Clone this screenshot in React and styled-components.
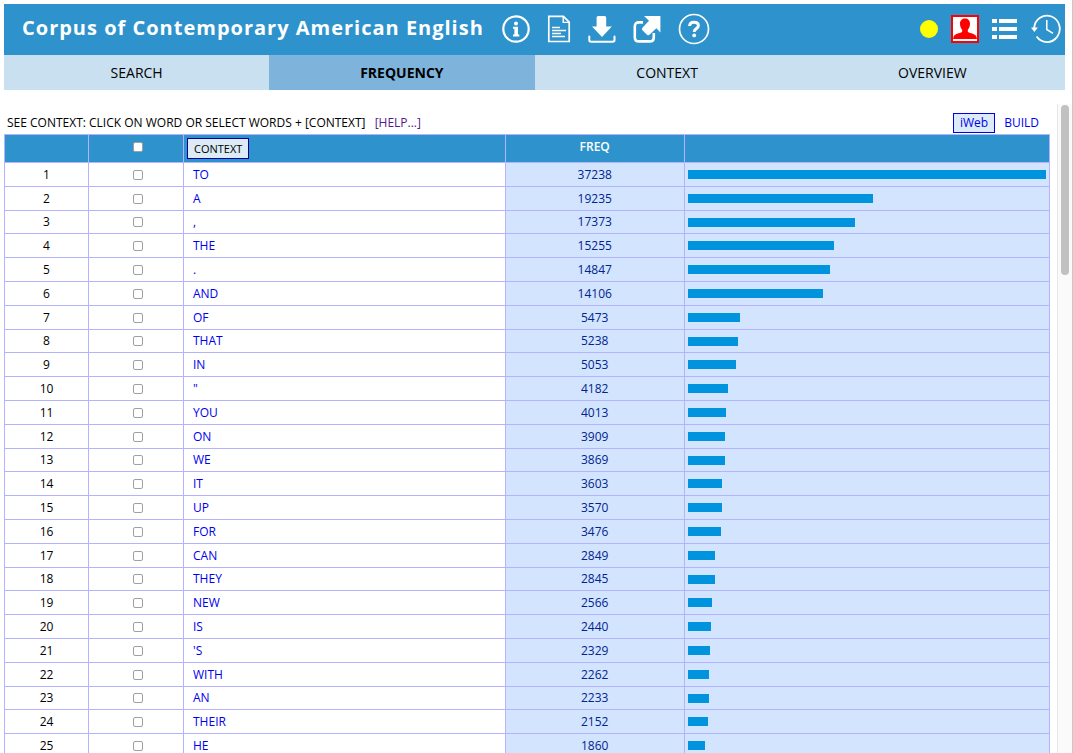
import React, { useState } from 'react';

import styled, { createGlobalStyle, css } from 'styled-components';

const WORDS = [
  ['TO', 37238],
  ['A', 19235],
  [',', 17373],
  ['THE', 15255],
  ['.', 14847],
  ['AND', 14106],
  ['OF', 5473],
  ['THAT', 5238],
  ['IN', 5053],
  ['"', 4182],
  ['YOU', 4013],
  ['ON', 3909],
  ['WE', 3869],
  ['IT', 3603],
  ['UP', 3570],
  ['FOR', 3476],
  ['CAN', 2849],
  ['THEY', 2845],
  ['NEW', 2566],
  ['IS', 2440],
  ['\'S', 2329],
  ['WITH', 2262],
  ['AN', 2233],
  ['THEIR', 2152],
  ['HE', 1860],
];

const MAX_FREQ = WORDS[0][1];

const TABS = ['SEARCH', 'FREQUENCY', 'CONTEXT', 'OVERVIEW'];

const GlobalStyle = createGlobalStyle`
    html, body, #root {
      height: 100%;
    }
    body {
      background: white;
      color: black;
      font-family: 'Open Sans', 'Noto Sans', sans-serif;
      font-size: 12px;
      line-height: 16px;
      margin: 0;
    }
    a {
      text-decoration: none;
    }
`;

const Page = styled.div`
    border-right: 1px solid #c8c8c8;
    box-sizing: border-box;
    display: flex;
    flex-direction: column;
    height: 100vh;
    overflow: hidden;
    padding: 4px 0 0 4px;
`;

const Top = styled.div`
    flex: none;
    margin: 0 7px 14px 0;
`;

const Header = styled.header`
    align-items: center;
    background: #2e93cc;
    color: white;
    display: flex;
    height: 50px;
    padding: 0 4px 1px 18px;
`;

const Title = styled.h1`
    font-size: 20px;
    font-weight: 700;
    letter-spacing: 1px;
    line-height: 28px;
    margin: 0 18px 3px 0;
    white-space: nowrap;
`;

const IconBar = styled.nav`
    align-items: center;
    display: flex;
    gap: ${props => props.$gap}px;
    margin-left: ${props => (props.$right ? 'auto' : '0')};
`;

const IconLink = styled.a`
    color: white;
    display: flex;
    svg {
      display: block;
    }
`;

const Tabs = styled.nav`
    display: flex;
`;

const Tab = styled.button`
    background: #c9e0f0;
    border: none;
    color: black;
    cursor: pointer;
    flex: 1 1 0;
    font: inherit;
    font-size: 14px;
    height: 35px;
    padding: 0;
    ${props => props.$active && css`
      background: #7eb4dc;
      font-weight: 700;
    `}
`;

const Body = styled.div`
    display: flex;
    flex: 1;
    min-height: 0;
`;

const Results = styled.main`
    flex: 1;
    margin-right: 7px;
    min-width: 0;
    overflow: hidden;
`;

const Intro = styled.div`
    align-items: center;
    box-sizing: border-box;
    display: flex;
    height: 30px;
    justify-content: space-between;
    padding: 8px 11px 0 3px;
`;

const HelpLink = styled.a`
    color: #551a8b;
    margin-left: 6px;
`;

const Links = styled.div`
    align-items: center;
    display: flex;
    gap: 9px;
`;

const TextLink = styled.a`
    color: #0000ee;
    ${props => props.$boxed && css`
      background: #dcebf5;
      border: 1px solid #0000ee;
      padding: 1px 6px;
    `}
`;

const Table = styled.table`
    border-collapse: collapse;
    table-layout: fixed;
    width: 100%;
    th, td {
      border: 1px solid #b3b3ff;
      box-sizing: border-box;
      padding: 0;
      text-align: center;
    }
    thead tr {
      background: #2e93cc;
      height: 28px;
    }
    tbody tr {
      height: 24px;
    }
    tbody tr:nth-child(5n + 3) {
      height: 23px;
    }
`;

const Col = styled.col`
    width: ${props => props.$width};
`;

const Heading = styled.th`
    color: white;
    font-weight: 600;
    && {
      padding: 0 0 3px ${props => (props.$check ? 4 : 0)}px;
    }
`;

const ButtonHeading = styled.th`
    font-weight: 400;
    && {
      padding-left: 3px;
      text-align: left;
    }
`;

const ContextButton = styled.button`
    background: #dcebf5;
    border: 1px solid #000099;
    color: black;
    cursor: pointer;
    display: block;
    font: inherit;
    font-size: 11px;
    height: 21px;
    padding: 0 6px;
`;

const Check = styled.input.attrs({ type: 'checkbox' })`
    appearance: none;
    background: white;
    border: 1px solid #a0a0a0;
    border-radius: 2px;
    box-sizing: border-box;
    display: block;
    height: 10px;
    margin: 0 auto;
    width: 10px;
    &:checked {
      background: #2e93cc;
    }
`;

const CheckCell = styled.td`
    && {
      padding-left: 4px;
    }
`;

const WordCell = styled.td`
    && {
      padding-left: 9px;
      text-align: left;
    }
`;

const FreqCell = styled.td`
    background: #d3e4ff;
    color: #00248c;
`;

const BarCell = styled.td`
    background: #d3e4ff;
    && {
      padding: 0 3px;
    }
`;

const Bar = styled.div`
    background: #0094de;
    height: 9px;
`;

const ScrollTrack = styled.div`
    background: #fafafa;
    border-left: 1px solid #e8e8e8;
    box-sizing: border-box;
    flex: none;
    padding: 1px 2px 0 3px;
    width: 15px;
`;

const ScrollThumb = styled.div`
    background: #c1c1c1;
    border-radius: 4px;
    height: 170px;
    width: 8px;
`;

const InfoIcon = () => (
  <svg width="28" height="28" viewBox="0 0 28 28" fill="none">
    <circle cx="14" cy="14" r="12.7" stroke="currentColor" strokeWidth="2.2" />
    <circle cx="14" cy="8.4" r="2" fill="currentColor" />
    <path d="M11 11.8h5v7.6h1.3v2H11v-2h1.400v-5.600H11z" fill="currentColor" />
  </svg>
);

const PageIcon = () => (
  <svg width="24" height="28" viewBox="0 0 24 28" fill="none">
    <path d="M1.8 1.4h14.6l5.8 5.8v19.3H1.8z" stroke="currentColor" strokeWidth="1.7" />
    <path d="M16.2 1.4v6h6" stroke="currentColor" strokeWidth="1.4" />
    <path d="M5 12.5h8M5 15.500h14M5 18.500h9M5 21.500h13" stroke="currentColor" strokeWidth="1.600" />
  </svg>
);

const DownloadIcon = () => (
  <svg width="28" height="28" viewBox="0 0 28 28" fill="none">
    <path d="M10.200 1h6.400q1.600 0 1.600 1.600v9h5.600L14 22 4 11.600h4.600v-9Q8.600 1 10.200 1z" fill="currentColor" />
    <path d="M1.300 21.500v3.500q0 1.800 1.800 1.800h21.600q1.800 0 1.800-1.800v-3.500" stroke="currentColor" strokeWidth="2" strokeLinecap="round" />
  </svg>
);

const ExternalIcon = () => (
  <svg width="28" height="28" viewBox="0 0 28 28" fill="none">
    <path d="M10 7.400H6Q1.800 7.400 1.800 11.600v10.600Q1.800 26.400 6 26.400h10.600q4.200 0 4.200-4.200V18" stroke="currentColor" strokeWidth="2.600" />
    <path d="M11 1h16.400v16.400l-4-4.200-7 6.600q-1.200 1-2.400 0l-4.600-4.600q-1-1.200 0-2.400l6.600-7z" fill="currentColor" />
  </svg>
);

const HelpIcon = () => (
  <svg width="32" height="32" viewBox="0 0 32 32" fill="none">
    <circle cx="16" cy="16" r="14.500" stroke="currentColor" strokeWidth="1.700" />
    <path d="M11.600 13q.2-3.800 4.400-3.800 4.400 0 4.400 3.400 0 1.900-2.300 3.300-1.900 1.200-1.900 3.100" stroke="currentColor" strokeWidth="3" />
    <circle cx="16.200" cy="22.400" r="1.900" fill="currentColor" />
  </svg>
);

const StatusIcon = () => (
  <svg width="18" height="18" viewBox="0 0 18 18">
    <circle cx="9" cy="9" r="9" fill="#ffff00" />
  </svg>
);

const UserIcon = () => (
  <svg width="28" height="28" viewBox="0 0 28 28">
    <rect x="1" y="1" width="26" height="26" fill="white" stroke="#ff0000" strokeWidth="2" />
    <path d="M14 3.500c3 0 5 2 5 5.300 0 2.800-1 4.700-2.200 6v1.700c0 1.500 7 1.900 8.400 4.600l.8 2.900H2l.8-2.900c1.400-2.700 8.400-3.100 8.400-4.600v-1.700C10 13.500 9 11.600 9 8.800c0-3.300 2-5.300 5-5.300z" fill="#ff0000" />
  </svg>
);

const ListIcon = () => (
  <svg width="26" height="20" viewBox="0 0 26 20" fill="currentColor">
    <path d="M0 0h5v4H0zM7 0h18v4H7zM0 8h5v4H0zM7 8h18v4H7zM0 16h5v4H0zM7 16h18v4H7z" />
  </svg>
);

const HistoryIcon = () => (
  <svg width="30" height="30" viewBox="0 0 30 30" fill="none">
    <path d="M3.200 14A12.800 13.200 0 1 1 5.600 22.600" stroke="currentColor" strokeWidth="1.800" />
    <path d="M0 13.500h6.800L3.400 18z" fill="currentColor" />
    <path d="M15.800 6v9.500l6.200 3.800" stroke="currentColor" strokeWidth="1.500" />
  </svg>
);

export default function App() {
  const [tab, setTab] = useState('FREQUENCY');
  const [selected, setSelected] = useState([]);

  const toggle = word => setSelected(selected.includes(word)
    ? selected.filter(w => w !== word)
    : [...selected, word]);

  const toggleAll = e => setSelected(e.target.checked ? WORDS.map(([word]) => word) : []);

  return (
    <Page>
      <GlobalStyle />
      <Top>
        <Header>
          <Title>Corpus of Contemporary American English</Title>
          <IconBar $gap={17}>
            <IconLink href="#info" aria-label="Information"><InfoIcon /></IconLink>
            <IconLink href="#texts" aria-label="Texts"><PageIcon /></IconLink>
            <IconLink href="#download" aria-label="Download"><DownloadIcon /></IconLink>
            <IconLink href="#links" aria-label="Related resources"><ExternalIcon /></IconLink>
            <IconLink href="#help" aria-label="Help"><HelpIcon /></IconLink>
          </IconBar>
          <IconBar $gap={13} $right>
            <StatusIcon />
            <IconLink href="#account" aria-label="Account"><UserIcon /></IconLink>
            <IconLink href="#lists" aria-label="Lists"><ListIcon /></IconLink>
            <IconLink href="#history" aria-label="History"><HistoryIcon /></IconLink>
          </IconBar>
        </Header>
        <Tabs>
          {TABS.map(name => (
            <Tab key={name} $active={name === tab} onClick={() => setTab(name)}>{name}</Tab>
          ))}
        </Tabs>
      </Top>
      <Body>
        <Results>
          <Intro>
            <span>
              SEE CONTEXT: CLICK ON WORD OR SELECT WORDS + [CONTEXT]{' '}
              <HelpLink href="#help">[HELP...]</HelpLink>
            </span>
            <Links>
              <TextLink href="#iweb" $boxed>iWeb</TextLink>
              <TextLink href="#build">BUILD</TextLink>
            </Links>
          </Intro>
          <Table>
            <colgroup>
              <Col $width="84px" />
              <Col $width="95px" />
              <Col $width="30.8%" />
              <Col $width="17.1%" />
              <Col />
            </colgroup>
            <thead>
              <tr>
                <Heading />
                <Heading $check>
                  <Check
                    aria-label="Select all words"
                    checked={selected.length === WORDS.length}
                    onChange={toggleAll}
                  />
                </Heading>
                <ButtonHeading><ContextButton>CONTEXT</ContextButton></ButtonHeading>
                <Heading>FREQ</Heading>
                <Heading />
              </tr>
            </thead>
            <tbody>
              {WORDS.map(([word, freq], i) => (
                <tr key={word}>
                  <td>{i + 1}</td>
                  <CheckCell>
                    <Check
                      aria-label={`Select ${word}`}
                      checked={selected.includes(word)}
                      onChange={() => toggle(word)}
                    />
                  </CheckCell>
                  <WordCell><TextLink href="#context">{word}</TextLink></WordCell>
                  <FreqCell>{freq}</FreqCell>
                  <BarCell><Bar style={{ width: `${(freq / MAX_FREQ) * 100}%` }} /></BarCell>
                </tr>
              ))}
            </tbody>
          </Table>
        </Results>
        <ScrollTrack>
          <ScrollThumb />
        </ScrollTrack>
      </Body>
    </Page>
  );
}
